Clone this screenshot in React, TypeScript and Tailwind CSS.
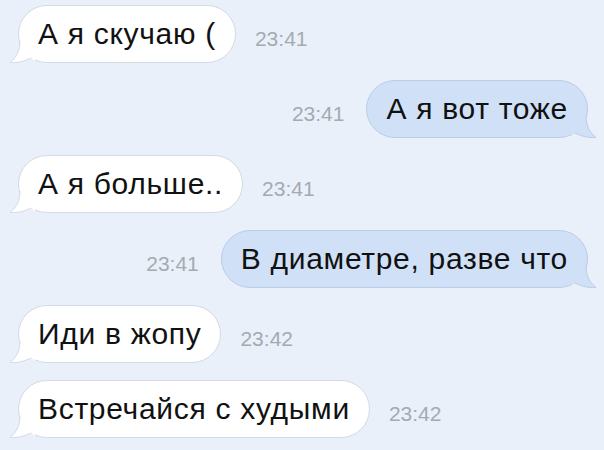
import React from "react";

type Msg = { id: number; text: string; time: string; out: boolean };

const messages: Msg[] = [
  { id: 1, text: "А я скучаю (", time: "23:41", out: false },
  { id: 2, text: "А я вот тоже", time: "23:41", out: true },
  { id: 3, text: "А я больше..", time: "23:41", out: false },
  { id: 4, text: "В диаметре, разве что", time: "23:41", out: true },
  { id: 5, text: "Иди в жопу", time: "23:42", out: false },
  { id: 6, text: "Встречайся с худыми", time: "23:42", out: false },
];

function Tail({ out }: { out: boolean }) {
  const fill = out ? "#d0e1f7" : "#ffffff";
  const stroke = out ? "#b9cde8" : "#d3dae3";
  return (
    <svg
      width="26"
      height="22"
      viewBox="0 0 26 22"
      className={`absolute bottom-[-1px] ${out ? "right-[-10px] -scale-x-100" : "left-[-10px]"}`}
    >
      <path d="M11 0 C11 9 8 16 1 21.5 C8 22 15 20.5 22 17 L26 20 L26 0 Z" fill={fill} />
      <path d="M11 0 C11 9 8 16 1 21.5 C8 22 15 20.5 22 17" fill="none" stroke={stroke} strokeWidth="1" />
    </svg>
  );
}

function Bubble({ m }: { m: Msg }) {
  return (
    <div
      className={`relative rounded-[29px] border px-[19px] py-[13px] text-[30px] leading-[30px] tracking-[0.7px] text-[#111] whitespace-nowrap ${
        m.out ? "bg-[#d0e1f7] border-[#b9cde8]" : "bg-white border-[#d3dae3]"
      }`}
    >
      {m.text}
      <Tail out={m.out} />
    </div>
  );
}

export default function App() {
  return (
    <div
      className="w-[604px] h-[450px] overflow-hidden bg-[#e9f0f9] pt-[5px] flex flex-col gap-[17px]"
      style={{ fontFamily: '"Liberation Sans", Arial, sans-serif' }}
    >
      {messages.map((m) =>
        m.out ? (
          <div key={m.id} className="flex items-center justify-end gap-[22px] pr-[16px]">
            <span className="mt-[9px] text-[21px] text-[#a5aab0]">{m.time}</span>
            <Bubble m={m} />
          </div>
        ) : (
          <div key={m.id} className="flex items-center gap-[19px] pl-[18px]">
            <Bubble m={m} />
            <span className="mt-[9px] text-[21px] text-[#a5aab0]">{m.time}</span>
          </div>
        )
      )}
    </div>
  );
}
